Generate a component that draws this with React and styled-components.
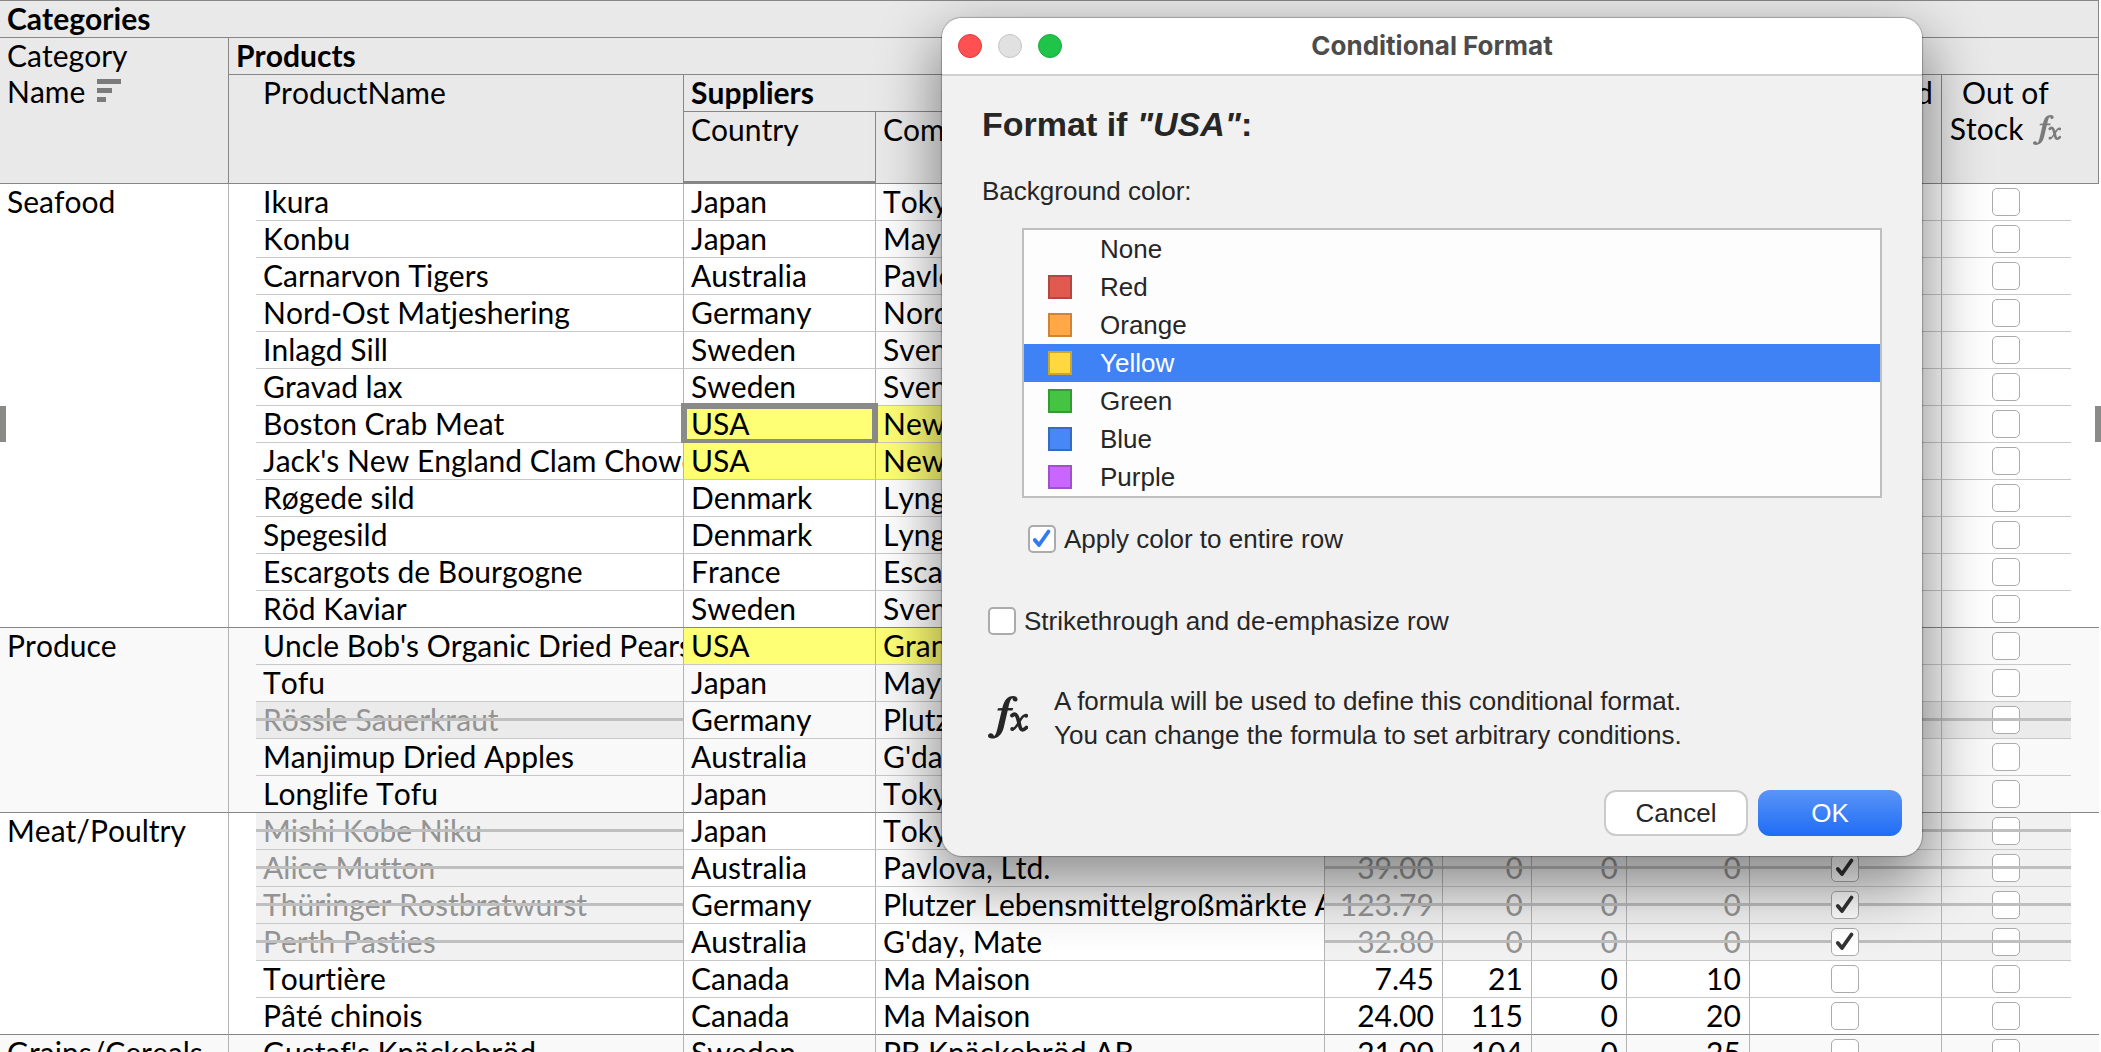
import React, { useState } from 'react';
import styled, { createGlobalStyle, css } from 'styled-components';

const GlobalStyle = createGlobalStyle`
  * { box-sizing: border-box; }
  body {
    margin: 0;
    background: #fff;
    overflow: hidden;
  }
`;

const ruleColor = '#868686';

const Sheet = styled.main`
  position: relative;
  height: 100vh;
  overflow: hidden;
  font-family: Lato, 'Open Sans', sans-serif;
  font-size: 30px;
  font-kerning: none;
  font-variant-ligatures: none;
  line-height: 34px;
  color: #000;
`;

const Grid = styled.table`
  width: calc(100% - 2px);
  min-width: 2000px;
  table-layout: fixed;
  border-collapse: separate;
  border-spacing: 0;
`;

const Head = styled.th`
  height: ${({ $height }) => $height || 37}px;
  padding: 0 8px 0 ${({ $indent }) => ($indent ? 34 : 7)}px;
  background: #e9e9e9;
  border-right: 1px solid ${ruleColor};
  border-bottom: ${({ $active }) => ($active ? 3 : 1)}px solid ${ruleColor};
  border-top: ${({ $top }) => ($top ? 1 : 0)}px solid ${ruleColor};
  font-weight: ${({ $group }) => ($group ? 700 : 400)};
  text-align: ${({ $align }) => $align || 'left'};
  vertical-align: top;
  white-space: ${({ $wrap }) => ($wrap ? 'normal' : 'nowrap')};
  overflow: hidden;
`;

// spans the last column and the margin, but centres over the column only
const LastHead = styled(Head)`
  padding-right: 36px;
`;

const HeadLines = styled.span`
  display: flex;
  flex-direction: column;
  gap: 2px;
`;

const Row = styled.tr`
  position: relative;
  background: ${({ $shaded }) => ($shaded ? '#f9f9f9' : '#fff')};
`;

const strike = css`
  position: relative;
  color: #939393;
  &::after {
    content: '';
    position: absolute;
    top: 16px;
    left: 0;
    right: -1px;
    height: 3px;
    background: #bfbfbf;
  }
`;

const Cell = styled.td`
  height: 37px;
  padding: 0 8px 0 7px;
  border-right: ${({ $last }) => ($last ? 0 : 1)}px solid #b4b4b4;
  border-bottom: 1px solid ${({ $end }) => ($end ? ruleColor : '#c8c8c8')};
  text-align: ${({ $align }) => $align || 'left'};
  vertical-align: top;
  white-space: nowrap;
  overflow: hidden;
  ${({ $yellow }) => $yellow && css`background: #ffff75;`}
  ${({ $dim, $shaded }) => $dim && css`background: ${$shaded ? '#ebebeb' : '#f1f1f1'};`}
  ${({ $dim }) => $dim && strike}
  ${({ $picked }) => $picked && css`
    position: relative;
    overflow: visible;
    &::after {
      content: '';
      position: absolute;
      inset: -3px;
      border: 6px solid #8a8a88;
    }
  `}
`;

const CategoryCell = styled(Cell)`
  border-bottom-color: ${ruleColor};
`;

const Gutter = styled.td`
  padding: 0;
  border-bottom: 1px solid ${({ $end }) => ($end ? ruleColor : 'transparent')};
`;

const RowMark = styled.span`
  position: absolute;
  top: 0;
  bottom: 1px;
  ${({ $side }) => ($side === 'left' ? 'left: 0;' : 'right: -2px;')}
  width: 6px;
  background: #8a8a88;
`;

const CellCheck = styled.span`
  display: flex;
  justify-content: center;
  padding-top: 4px;
`;

const TickWrap = styled.span`
  position: relative;
  z-index: ${({ $raised }) => ($raised ? 1 : 'auto')};
  display: inline-flex;
  width: 28px;
  height: 28px;
  svg {
    position: absolute;
    inset: 0;
    pointer-events: none;
  }
`;

const TickInput = styled.input`
  appearance: none;
  width: 28px;
  height: 28px;
  margin: 0;
  background: #fff;
  border: ${({ $thick }) => ($thick ? 2 : 1)}px solid #ababab;
  border-radius: 5px;
`;

const SortIcon = styled.svg`
  margin-left: 4px;
`;

const FxIcon = styled.svg`
  flex: none;
  vertical-align: ${({ $inline }) => ($inline ? '-6px' : 'baseline')};
  margin-left: ${({ $inline }) => ($inline ? 2 : 0)}px;
`;

const Dialog = styled.section`
  position: absolute;
  z-index: 2;
  top: 18px;
  left: 942px;
  width: 980px;
  background: #f1f1f1;
  border-radius: 20px;
  box-shadow: 0 0 1px 1px rgba(0, 0, 0, 0.25), 0 24px 60px 6px rgba(0, 0, 0, 0.44);
  overflow: hidden;
  font-family: 'Liberation Sans', Arial, sans-serif;
  font-size: 26px;
  font-kerning: auto;
  line-height: 34px;
  color: #262626;
`;

const TitleBar = styled.header`
  display: grid;
  grid-template-columns: 1fr auto 1fr;
  align-items: center;
  height: 58px;
  padding: 0 16px;
  background: #fff;
  border-bottom: 2px solid #d0d0d0;
`;

const Lights = styled.div`
  display: flex;
  gap: 16px;
`;

const Light = styled.button`
  width: 24px;
  height: 24px;
  padding: 0;
  border: 1px solid ${({ $edge }) => $edge};
  border-radius: 50%;
  background: ${({ $fill }) => $fill};
`;

const Title = styled.h1`
  margin: 0;
  font-family: Inter, sans-serif;
  font-size: 26px;
  font-weight: 700;
  line-height: 34px;
  color: #4c4c4c;
`;

const Body = styled.form`
  display: flex;
  flex-direction: column;
  padding: 28px 20px 20px 40px;
`;

const Heading = styled.h2`
  margin: 0 0 30px;
  font-size: 34px;
  line-height: 40px;
`;

const ColorField = styled.fieldset`
  margin: 0 20px 0 0;
  padding: 0;
  border: 0;
`;

const Legend = styled.legend`
  padding: 0;
`;

const ColorList = styled.div`
  margin: 20px 0 0 40px;
  background: #fdfdfd;
  border: 2px solid #bfbfbf;
`;

const ColorOption = styled.label`
  display: flex;
  align-items: center;
  gap: 28px;
  height: 38px;
  padding-left: 24px;
  color: ${({ $on }) => ($on ? '#fff' : '#262626')};
  background: ${({ $on }) => ($on ? '#3f82f6' : 'transparent')};
  input {
    position: absolute;
    opacity: 0;
  }
`;

const Swatch = styled.span`
  width: 24px;
  height: 24px;
  border: 2px solid ${({ $edge }) => $edge};
  background: ${({ $fill }) => $fill};
`;

const Option = styled.label`
  display: flex;
  align-items: center;
  gap: 8px;
  height: 34px;
  margin: ${({ $nested }) => ($nested ? '24px 0 0 46px' : '48px 0 0 6px')};
`;

const Note = styled.div`
  display: flex;
  align-items: center;
  gap: 26px;
  margin: 46px 0 0 6px;
  p { margin: 0; }
`;

const Actions = styled.footer`
  display: flex;
  justify-content: flex-end;
  gap: 10px;
  margin-top: 38px;
`;

const Button = styled.button`
  width: 144px;
  height: 46px;
  padding: 0;
  border: 2px solid #cbcbcb;
  border-radius: 12px;
  background: #fff;
  color: #262626;
  font: inherit;
  ${({ $primary }) => $primary && css`
    border: 0;
    background: linear-gradient(#5a95f8, #1f6cf5);
    color: #fff;
  `}
`;

const columns = [229, 27, 428, 192, null, 118, 89, 95, 123, 192, 129, 28];

const groups = [
  {
    name: 'Seafood',
    rows: [
      { product: 'Ikura', country: 'Japan', company: 'Tokyo Traders', nums: ['31.00', '31', '0', '0'] },
      { product: 'Konbu', country: 'Japan', company: "Mayumi's", nums: ['6.00', '24', '0', '5'] },
      { product: 'Carnarvon Tigers', country: 'Australia', company: 'Pavlova, Ltd.', nums: ['62.50', '42', '0', '0'] },
      { product: 'Nord-Ost Matjeshering', country: 'Germany', company: 'Nord-Ost-Fisch', nums: ['25.89', '10', '0', '15'] },
      { product: 'Inlagd Sill', country: 'Sweden', company: 'Svensk Sjöföda AB', nums: ['19.00', '112', '0', '20'] },
      { product: 'Gravad lax', country: 'Sweden', company: 'Svensk Sjöföda AB', nums: ['26.00', '11', '50', '25'] },
      { product: 'Boston Crab Meat', country: 'USA', company: 'New England Seafood', nums: ['18.40', '123', '0', '30'], picked: true },
      { product: "Jack's New England Clam Chowder", country: 'USA', company: 'New England Seafood', nums: ['9.65', '85', '0', '10'] },
      { product: 'Røgede sild', country: 'Denmark', company: 'Lyngbysild', nums: ['9.50', '5', '70', '15'] },
      { product: 'Spegesild', country: 'Denmark', company: 'Lyngbysild', nums: ['12.00', '95', '0', '0'] },
      { product: 'Escargots de Bourgogne', country: 'France', company: 'Escargots Nouveaux', nums: ['13.25', '62', '0', '20'] },
      { product: 'Röd Kaviar', country: 'Sweden', company: 'Svensk Sjöföda AB', nums: ['15.00', '101', '0', '5'] },
    ],
  },
  {
    name: 'Produce',
    rows: [
      { product: "Uncle Bob's Organic Dried Pears", country: 'USA', company: "Grandma Kelly's Homestead", nums: ['30.00', '15', '0', '10'] },
      { product: 'Tofu', country: 'Japan', company: "Mayumi's", nums: ['23.25', '35', '0', '0'] },
      { product: 'Rössle Sauerkraut', country: 'Germany', company: 'Plutzer Lebensmittelgroßmärkte AG', nums: ['45.60', '26', '0', '0'], gone: true },
      { product: 'Manjimup Dried Apples', country: 'Australia', company: "G'day, Mate", nums: ['53.00', '20', '0', '10'] },
      { product: 'Longlife Tofu', country: 'Japan', company: 'Tokyo Traders', nums: ['10.00', '4', '20', '5'] },
    ],
  },
  {
    name: 'Meat/Poultry',
    rows: [
      { product: 'Mishi Kobe Niku', country: 'Japan', company: 'Tokyo Traders', nums: ['97.00', '29', '0', '0'], gone: true },
      { product: 'Alice Mutton', country: 'Australia', company: 'Pavlova, Ltd.', nums: ['39.00', '0', '0', '0'], gone: true },
      { product: 'Thüringer Rostbratwurst', country: 'Germany', company: 'Plutzer Lebensmittelgroßmärkte AG', nums: ['123.79', '0', '0', '0'], gone: true },
      { product: 'Perth Pasties', country: 'Australia', company: "G'day, Mate", nums: ['32.80', '0', '0', '0'], gone: true },
      { product: 'Tourtière', country: 'Canada', company: 'Ma Maison', nums: ['7.45', '21', '0', '10'] },
      { product: 'Pâté chinois', country: 'Canada', company: 'Ma Maison', nums: ['24.00', '115', '0', '20'] },
    ],
  },
  {
    name: 'Grains/Cereals',
    rows: [
      { product: "Gustaf's Knäckebröd", country: 'Sweden', company: 'PB Knäckebröd AB', nums: ['21.00', '104', '0', '25'] },
    ],
  },
];

const colors = [
  { name: 'None' },
  { name: 'Red', fill: '#e05a50', edge: '#b3463f' },
  { name: 'Orange', fill: '#ffa845', edge: '#cc8535' },
  { name: 'Yellow', fill: '#ffd83f', edge: '#c9a72f' },
  { name: 'Green', fill: '#45c443', edge: '#349a33' },
  { name: 'Blue', fill: '#4788f6', edge: '#336bc7' },
  { name: 'Purple', fill: '#c966ff', edge: '#a150cc' },
];

const Tick = ({ thick, color, ...rest }) => (
  <TickWrap $raised={rest.checked}>
    <TickInput type="checkbox" $thick={thick} {...rest} />
    {rest.checked && (
      <svg width="28" height="28" viewBox="0 0 28 28" fill="none">
        <path d="M6.8 15 L11 20 L20.5 6.5" stroke={color} strokeWidth="3.8" strokeLinecap="round" strokeLinejoin="round" />
      </svg>
    )}
  </TickWrap>
);

const Fx = ({ size, color, inline }) => (
  <FxIcon $inline={inline} width={size} height={Math.round(size * 1.1)} viewBox="0 0 40 44" fill="none" stroke={color} strokeLinecap="round" aria-label="formula">
    <path
      d="M29.5 3.4C29.5 1.2 27.5 0 25 0C19.5 0 16.3 4 14.3 12L10 12.3L9.3 14.6L13.7 14.6L9.8 31C8.5 36.5 7.6 39.3 6 40C5.3 38 4.5 37.2 2.8 37.2C1.2 37.2 0 38.3 0 39.8C0 41.6 1.7 42.6 4 42.6C10 42.6 14 38.5 15.9 31L19.7 14.6L24.5 14.6L25.2 12L20.3 12C21.5 6 22.7 2.8 24.5 2.2C24.8 4.3 25.6 5.5 27.2 5.5C28.6 5.5 29.5 4.6 29.5 3.4Z"
      fill={color}
      stroke="none"
    />
    <path d="M24 19.5C26.8 17 28.8 18.5 30 23L31.5 29C32.5 34 34.5 35.5 38.5 31.5" strokeWidth="3.8" />
    <path d="M37.5 19.5C33.5 18 29 33.5 24.5 33.3" strokeWidth="2.4" />
    <path d="M38 19.8h.1M24.2 33h.1" strokeWidth="4" />
  </FxIcon>
);

const GroupRows = ({ group, shaded, onToggle }) => (
  <tbody>
    {group.rows.map((row, i) => {
      const end = i === group.rows.length - 1;
      const yellow = row.country === 'USA';
      return (
        <Row key={row.product} $shaded={shaded}>
          {i === 0 && <CategoryCell rowSpan={group.rows.length}>{group.name}</CategoryCell>}
          <Gutter $end={end}>
            {row.picked && (
              <>
                <RowMark $side="left" />
                <RowMark $side="right" />
              </>
            )}
          </Gutter>
          <Cell $end={end} $dim={row.gone} $shaded={shaded}>{row.product}</Cell>
          <Cell $end={end} $yellow={yellow} $picked={row.picked}>{row.country}</Cell>
          <Cell $end={end} $yellow={yellow}>{row.company}</Cell>
          {row.nums.map((num, n) => (
            <Cell key={n} $end={end} $align="right" $dim={row.gone} $shaded={shaded}>{num}</Cell>
          ))}
          <Cell $end={end} $dim={row.gone} $shaded={shaded}>
            <CellCheck>
              <Tick color="#333" aria-label={`${row.product} discontinued`} checked={!!row.gone} onChange={onToggle} />
            </CellCheck>
          </Cell>
          <Cell $end={end} $last $dim={row.gone} $shaded={shaded}>
            <CellCheck>
              <Tick aria-label={`${row.product} out of stock`} checked={false} onChange={onToggle} />
            </CellCheck>
          </Cell>
          <Gutter $end={end} />
        </Row>
      );
    })}
  </tbody>
);

const ConditionalFormat = () => {
  const [color, setColor] = useState('Yellow');
  const [wholeRow, setWholeRow] = useState(true);
  const [struck, setStruck] = useState(false);
  return (
    <Dialog role="dialog" aria-labelledby="dialog-title">
      <TitleBar>
        <Lights>
          <Light aria-label="Close" $fill="#ff5052" $edge="#e2383f" />
          <Light aria-label="Minimize" $fill="#e1e1e1" $edge="#c4c4c4" />
          <Light aria-label="Zoom" $fill="#1fc449" $edge="#17ab3c" />
        </Lights>
        <Title id="dialog-title">Conditional Format</Title>
      </TitleBar>
      <Body onSubmit={(e) => e.preventDefault()}>
        <Heading>Format if <em>"USA"</em>:</Heading>
        <ColorField>
          <Legend>Background color:</Legend>
          <ColorList>
            {colors.map(({ name, fill = 'transparent', edge = 'transparent' }) => (
              <ColorOption key={name} $on={color === name}>
                <input type="radio" name="color" checked={color === name} onChange={() => setColor(name)} />
                <Swatch $fill={fill} $edge={edge} />
                {name}
              </ColorOption>
            ))}
          </ColorList>
        </ColorField>
        <Option $nested>
          <Tick thick color="#2f7bf6" checked={wholeRow} onChange={() => setWholeRow(!wholeRow)} />
          Apply color to entire row
        </Option>
        <Option>
          <Tick thick color="#2f7bf6" checked={struck} onChange={() => setStruck(!struck)} />
          Strikethrough and de-emphasize row
        </Option>
        <Note>
          <Fx size={40} color="#262626" />
          <p>
            A formula will be used to define this conditional format.
            <br />
            You can change the formula to set arbitrary conditions.
          </p>
        </Note>
        <Actions>
          <Button type="button">Cancel</Button>
          <Button type="submit" $primary>OK</Button>
        </Actions>
      </Body>
    </Dialog>
  );
};

const App = () => {
  const noop = () => {};
  return (
    <>
      <GlobalStyle />
      <Sheet>
        <Grid>
          <colgroup>
            {columns.map((width, i) => <col key={i} style={width ? { width } : undefined} />)}
          </colgroup>
          <thead>
            <tr>
              <Head colSpan={12} $height={38} $top $group>Categories</Head>
            </tr>
            <tr>
              <Head rowSpan={3} $wrap>
                <HeadLines>
                  <span>Category</span>
                  <span>
                    Name{' '}
                    <SortIcon width="24" height="24" viewBox="0 0 24 24" fill="#7b7b7b">
                      <path d="M0 0h24v5H0zM0 9h15v5H0zM0 18h9v5H0z" />
                    </SortIcon>
                  </span>
                </HeadLines>
              </Head>
              <Head colSpan={11} $group>Products</Head>
            </tr>
            <tr>
              <Head colSpan={2} rowSpan={2} $indent>ProductName</Head>
              <Head colSpan={2} $group>Suppliers</Head>
              <Head rowSpan={2} $align="right" $wrap>Unit Price</Head>
              <Head rowSpan={2} $align="right" $wrap>In Stock</Head>
              <Head rowSpan={2} $align="right" $wrap>On Order</Head>
              <Head rowSpan={2} $align="right" $wrap>Reorder Level</Head>
              <Head rowSpan={2} $align="right">Discontinued</Head>
              <LastHead colSpan={2} rowSpan={2} $align="center" $wrap>
                <HeadLines>
                  <span>Out of</span>
                  <span>Stock <Fx size={28} color="#7b7b7b" inline /></span>
                </HeadLines>
              </LastHead>
            </tr>
            <tr>
              <Head $height={72} $active>Country</Head>
              <Head $height={72}>Company</Head>
            </tr>
          </thead>
          {groups.map((group, i) => (
            <GroupRows key={group.name} group={group} shaded={i % 2 === 1} onToggle={noop} />
          ))}
        </Grid>
        <ConditionalFormat />
      </Sheet>
    </>
  );
};

export default App;
